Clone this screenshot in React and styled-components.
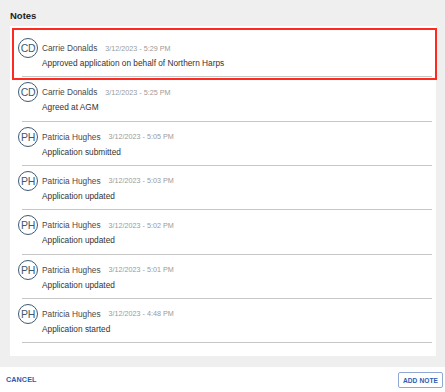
import React from "react";
import styled, { createGlobalStyle } from "styled-components";

const GlobalStyle = createGlobalStyle`
    html, body {
        margin: 0;
        padding: 0;
        background: #efefef;
        font-family: "Liberation Sans", Arial, sans-serif;
    }
`;

const Page = styled.div`
    width: 445px;
    height: 392px;
    display: flex;
    flex-direction: column;
    background: #efefef;
`;

const Header = styled.h2`
    margin: 0;
    padding: 10px 10px 5px;
    font-size: 9.5px;
    line-height: 11px;
    font-weight: bold;
    color: #222;
`;

const Card = styled.div`
    margin: 0 9px 0 10px;
    padding: 7px 0 13px 8px;
    background: #fff;
    display: flex;
    flex-direction: column;
`;

const Item = styled.div`
    position: relative;
    display: flex;
    flex-direction: column;

    ${(p) => p.selected && `
        &::before {
            content: "";
            position: absolute;
            top: -5px;
            bottom: -3px;
            left: -6px;
            right: -1px;
            border: 2px solid #ff2a1f;
            pointer-events: none;
        }
    `}
`;

const Row = styled.div`
    display: flex;
    align-items: flex-start;
    gap: 4px;
    padding-top: 5px;
`;

const Avatar = styled.div`
    width: 18px;
    height: 18px;
    border: 1px solid #3e5a70;
    border-radius: 50%;
    flex-shrink: 0;
    display: flex;
    align-items: center;
    justify-content: center;
    font-size: 10.5px;
    color: #3e5a70;
    letter-spacing: -0.3px;
`;

const Body = styled.div`
    display: flex;
    flex-direction: column;
`;

const Meta = styled.div`
    height: 20px;
    display: flex;
    align-items: center;
    gap: 8px;
`;

const Name = styled.span`
    font-size: 8.3px;
    color: #4a4a4a;
`;

const Date = styled.span`
    font-size: 7.2px;
    color: #9a9a9a;
`;

const Message = styled.div`
    font-size: 8.3px;
    line-height: 10.33px;
    color: #333;
`;

const Divider = styled.div`
    height: 1px;
    margin: 8px 4px 0 4px;
    background: #c6c6c6;
`;

const Footer = styled.div`
    margin-top: auto;
    height: 25px;
    background: #fff;
    display: flex;
    align-items: center;
    justify-content: space-between;
    padding: 0 2px 0 6px;
`;

const TextButton = styled.button`
    border: none;
    background: none;
    padding: 0;
    font-family: inherit;
    font-size: 7.2px;
    font-weight: bold;
    color: #2a5db0;
    letter-spacing: 0.1px;
`;

const OutlineButton = styled(TextButton)`
    width: 45px;
    height: 16px;
    border: 1px solid #8fa9d4;
    border-radius: 2px;
    font-size: 6.6px;
    margin-top: 1px;
`;

const notes = [
    { initials: "CD", name: "Carrie Donalds", date: "3/12/2023 - 5:29 PM", text: "Approved application on behalf of Northern Harps" },
    { initials: "CD", name: "Carrie Donalds", date: "3/12/2023 - 5:25 PM", text: "Agreed at AGM" },
    { initials: "PH", name: "Patricia Hughes", date: "3/12/2023 - 5:05 PM", text: "Application submitted" },
    { initials: "PH", name: "Patricia Hughes", date: "3/12/2023 - 5:03 PM", text: "Application updated" },
    { initials: "PH", name: "Patricia Hughes", date: "3/12/2023 - 5:02 PM", text: "Application updated" },
    { initials: "PH", name: "Patricia Hughes", date: "3/12/2023 - 5:01 PM", text: "Application updated" },
    { initials: "PH", name: "Patricia Hughes", date: "3/12/2023 - 4:48 PM", text: "Application started" },
];

const App = () => {
    return (<Page>
        <GlobalStyle />
        <Header>Notes</Header>
        <Card>
            {notes.map((note, i) => (
                <Item key={i} selected={i === 0}>
                    <Row>
                        <Avatar>{note.initials}</Avatar>
                        <Body>
                            <Meta>
                                <Name>{note.name}</Name>
                                <Date>{note.date}</Date>
                            </Meta>
                            <Message>{note.text}</Message>
                        </Body>
                    </Row>
                    <Divider />
                </Item>
            ))}
        </Card>
        <Footer>
            <TextButton>CANCEL</TextButton>
            <OutlineButton>ADD NOTE</OutlineButton>
        </Footer>
    </Page>)
}

export default App
